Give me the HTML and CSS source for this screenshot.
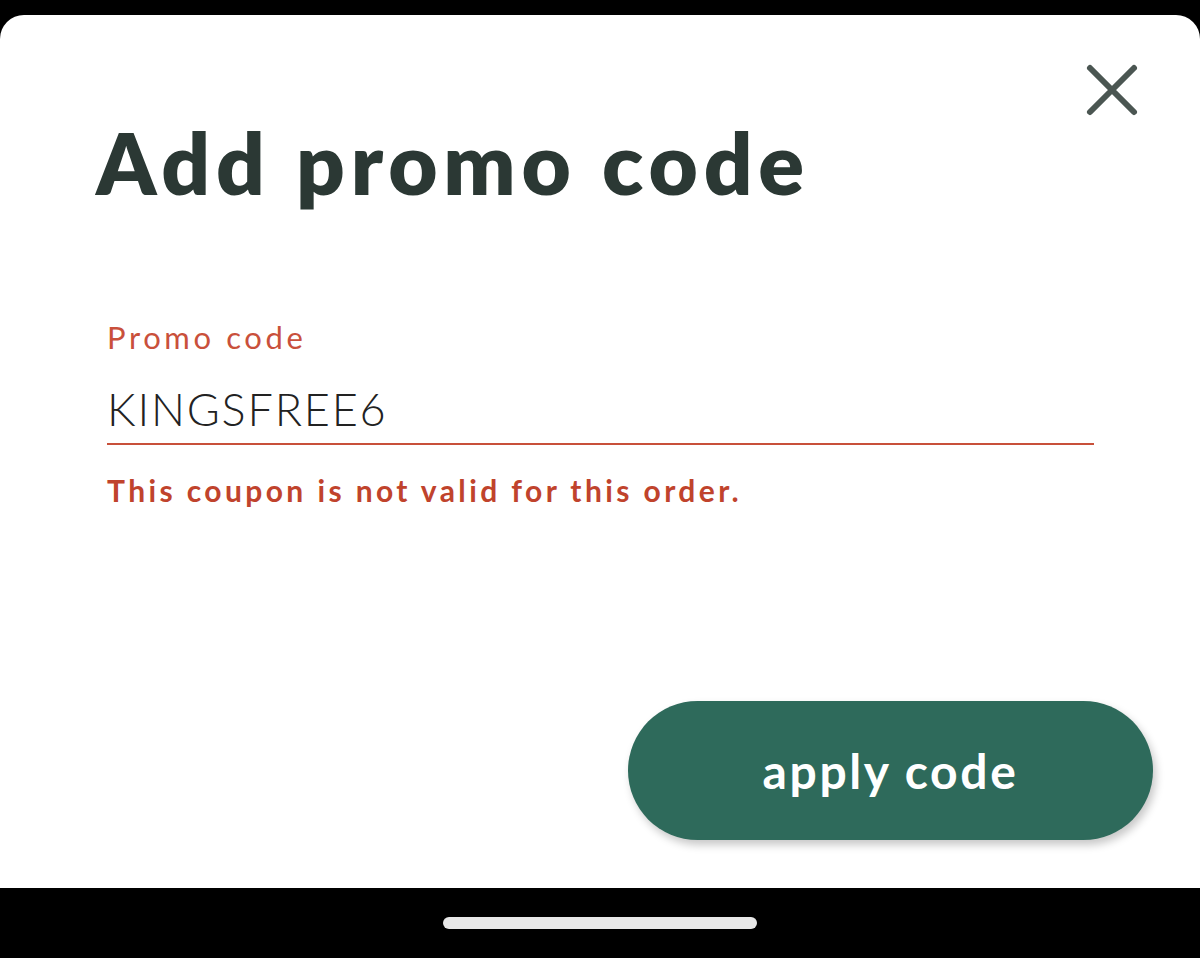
FILE: index.html
```html
<!DOCTYPE html>
<html lang="en">
<head>
    <meta charset="UTF-8">
    <meta name="viewport" content="width=device-width, initial-scale=1.0">
    <title>Add promo code</title>
    <link rel="stylesheet" href="styles.css">
</head>
<body>
    <div class="status-bar"></div>

    <div class="sheet">
        <!-- close -->
        <button type="button" class="close-btn" aria-label="Close">
            <svg width="56" height="56" viewBox="0 0 56 56">
                <path d="M6 6 L50 50 M50 6 L6 50" stroke="#4b5652" stroke-width="6" stroke-linecap="round" fill="none"/>
            </svg>
        </button>

        <h1 class="sheet-title">Add promo code</h1>

        <!-- promo code field -->
        <div class="field">
            <label for="promoCode">Promo code</label>
            <input type="text" id="promoCode" name="promoCode" value="KINGSFREE6">
        </div>
        <p class="error-msg">This coupon is not valid for this order.</p>

        <button type="button" class="btn-apply">apply code</button>
    </div>

    <div class="home-bar">
        <span class="home-indicator"></span>
    </div>
</body>
</html>
```

FILE: styles.css
```css
* {
    margin: 0;
    padding: 0;
    box-sizing: border-box;
}
body {
    font-family: 'Lato', 'Noto Sans', sans-serif;
    background-color: #000;
    width: 1200px;
    height: 958px;
    display: flex;
    flex-direction: column;
    overflow: hidden;
}
.status-bar {
    height: 15px;
    flex-shrink: 0;
}
.sheet {
    position: relative;
    flex: 1;
    background: white;
    border-radius: 24px 24px 0 0;
    padding: 105px 47px 48px 96px;
    display: flex;
    flex-direction: column;
}
.close-btn {
    position: absolute;
    top: 47px;
    right: 60px;
    width: 56px;
    height: 56px;
    border: none;
    background: none;
    cursor: pointer;
}
.close-btn svg {
    display: block;
}
.sheet-title {
    font-size: 85px;
    line-height: 85px;
    font-weight: 800;
    color: #2b3834;
    letter-spacing: 5.8px;
}
.field {
    margin: 114px 59px 0 11px;
}
.field label {
    display: block;
    font-size: 31px;
    line-height: 36px;
    color: #c9503b;
    letter-spacing: 3.6px;
}
.field input {
    display: block;
    width: 100%;
    height: 90px;
    padding: 31px 0 11px;
    border: none;
    border-bottom: 2px solid #c8503a;
    font-family: 'Lato', 'Noto Sans', sans-serif;
    font-size: 45px;
    line-height: 54px;
    font-weight: 300;
    color: #222;
    letter-spacing: 1.8px;
    outline: none;
    background: transparent;
}
.error-msg {
    margin: 27px 0 0 11px;
    font-size: 30px;
    line-height: 36px;
    font-weight: 700;
    color: #c0432c;
    letter-spacing: 3.4px;
}
.btn-apply {
    margin-top: auto;
    align-self: flex-end;
    width: 525px;
    height: 139px;
    border: none;
    border-radius: 70px;
    background-color: #2e6a5b;
    color: white;
    font-family: 'Lato', 'Noto Sans', sans-serif;
    font-size: 48px;
    font-weight: 700;
    letter-spacing: 2.6px;
    box-shadow: 3px 5px 8px rgba(0,0,0,0.22);
    cursor: pointer;
}
.home-bar {
    height: 70px;
    flex-shrink: 0;
    display: flex;
    justify-content: center;
    padding-top: 29px;
}
.home-indicator {
    width: 314px;
    height: 12px;
    border-radius: 6px;
    background-color: #e8e8e8;
}
```
